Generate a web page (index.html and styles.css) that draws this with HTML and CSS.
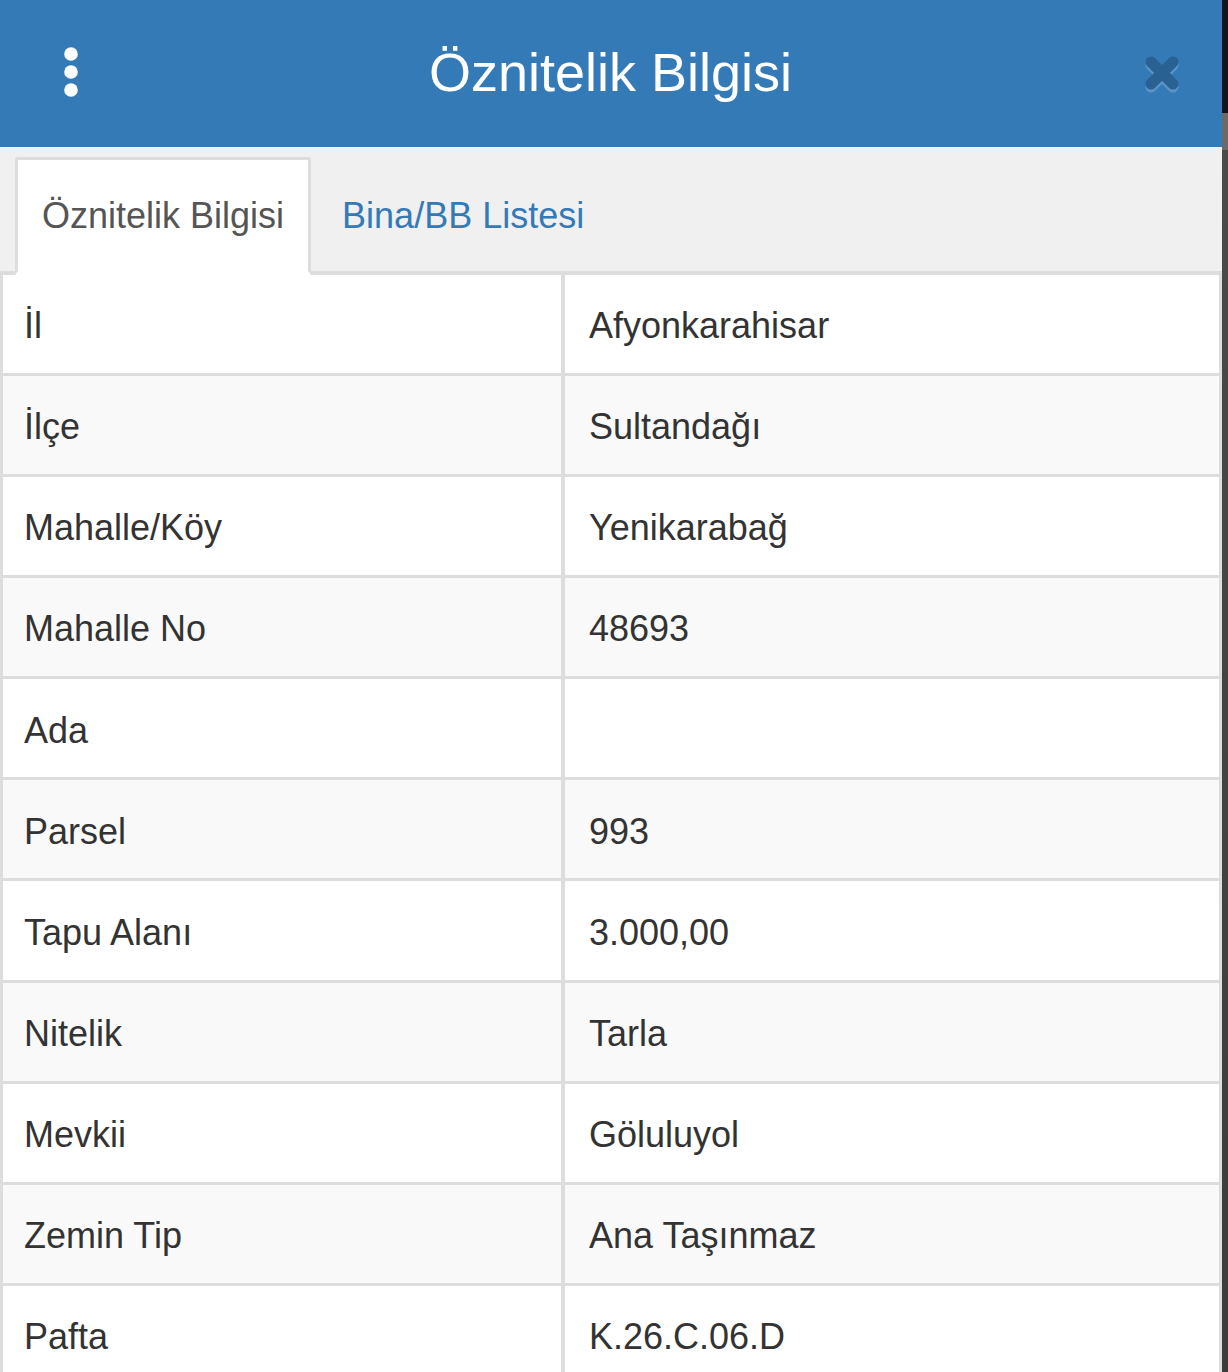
FILE: index.html
```html
<!DOCTYPE html>
<html lang="tr">
<head>
<meta charset="utf-8">
<title>Öznitelik Bilgisi</title>
<link rel="stylesheet" href="styles.css">
</head>
<body>
<div class="screen">
  <div class="app">
    <header class="topbar">
      <button class="menu-btn" aria-label="Menü">
        <svg width="16" height="52" viewBox="0 0 16 52">
          <circle cx="8" cy="7" r="6.8" fill="#fff"/>
          <circle cx="8" cy="25" r="6.8" fill="#fff"/>
          <circle cx="8" cy="43" r="6.8" fill="#fff"/>
        </svg>
      </button>
      <h1 class="title">Öznitelik Bilgisi</h1>
      <button class="close-btn" aria-label="Kapat">
        <svg width="38" height="42" viewBox="0 0 38 42">
          <g stroke="#5c95c5" stroke-width="11" stroke-linecap="round">
            <line x1="8" y1="11" x2="30" y2="33"/>
            <line x1="30" y1="11" x2="8" y2="33"/>
          </g>
          <g stroke="#296292" stroke-width="11" stroke-linecap="round">
            <line x1="8" y1="8" x2="30" y2="30"/>
            <line x1="30" y1="8" x2="8" y2="30"/>
          </g>
        </svg>
      </button>
    </header>

    <ul class="tabs">
      <li class="tab active">Öznitelik Bilgisi</li>
      <li class="tab">Bina/BB Listesi</li>
    </ul>

    <table class="attrs">
      <tbody>
        <tr><td class="key">İl</td><td class="val">Afyonkarahisar</td></tr>
        <tr><td class="key">İlçe</td><td class="val">Sultandağı</td></tr>
        <tr><td class="key">Mahalle/Köy</td><td class="val">Yenikarabağ</td></tr>
        <tr><td class="key">Mahalle No</td><td class="val">48693</td></tr>
        <tr><td class="key">Ada</td><td class="val"></td></tr>
        <tr><td class="key">Parsel</td><td class="val">993</td></tr>
        <tr><td class="key">Tapu Alanı</td><td class="val">3.000,00</td></tr>
        <tr><td class="key">Nitelik</td><td class="val">Tarla</td></tr>
        <tr><td class="key">Mevkii</td><td class="val">Göluluyol</td></tr>
        <tr><td class="key">Zemin Tip</td><td class="val">Ana Taşınmaz</td></tr>
        <tr><td class="key">Pafta</td><td class="val">K.26.C.06.D</td></tr>
      </tbody>
    </table>
  </div>
  <div class="edge"></div>
</div>
</body>
</html>
```

FILE: styles.css
```css
* {
  box-sizing: border-box;
}

html, body {
  margin: 0;
  padding: 0;
  background: #fff;
}

body {
  font-family: "Liberation Sans", Helvetica, Arial, sans-serif;
  color: #333;
  overflow: hidden;
  height: 1372px;
}

.screen {
  display: flex;
  height: 1372px;
}

.app {
  flex: 1;
  min-width: 0;
  overflow: hidden;
}

.edge {
  width: 6px;
  flex: none;
  background: linear-gradient(to bottom, #0f1520 0, #0f1520 113px, #6a6a6a 113px, #6a6a6a 150px, #4a4a4a 150px, #3c3c3c 100%);
}

/* Header */
.topbar {
  height: 147px;
  background: #337ab7;
  display: flex;
  align-items: center;
}

.menu-btn,
.close-btn {
  background: none;
  border: 0;
  padding: 0;
  display: flex;
  cursor: pointer;
}

.menu-btn {
  margin-left: 63px;
  margin-top: -2px;
}

.title {
  flex: 1;
  margin: -4px 1px 0 0;
  text-align: center;
  color: #fff;
  font-size: 54px;
  font-weight: normal;
  line-height: 1;
}

.close-btn {
  margin-right: 41px;
  margin-top: 3px;
}

/* Tabs */
.tabs {
  list-style: none;
  margin: 0;
  padding: 10px 0 0 15px;
  background: #f0f0f0;
  border-bottom: 4px solid #ddd;
  display: flex;
}

.tab {
  font-size: 36px;
  line-height: 51px;
  padding: 30px 24px;
  border: 3px solid transparent;
  border-radius: 3px 3px 0 0;
  margin-bottom: -4px;
  margin-right: 5px;
  color: #337ab7;
}

.tab.active {
  background: #fff;
  color: #555;
  border-color: #ddd;
  border-bottom: 4px solid #fff;
}

.tab.active + .tab {
  margin-left: -1px;
}

/* Table */
.attrs {
  width: 100%;
  border-collapse: separate;
  border-spacing: 0;
  table-layout: fixed;
  border-left: 3px solid #ddd;
  border-right: 3px solid #ddd;
}

.attrs td {
  font-size: 36px;
  line-height: 50px;
  padding: 26.2px 24px 21.9px;
  border-bottom: 3px solid #ddd;
  vertical-align: top;
  white-space: nowrap;
}

.attrs td.key {
  width: 562px;
  padding-left: 21px;
  border-right: 4px solid #ddd;
}

.attrs tr:nth-child(even) td {
  background: #f9f9f9;
}
```
